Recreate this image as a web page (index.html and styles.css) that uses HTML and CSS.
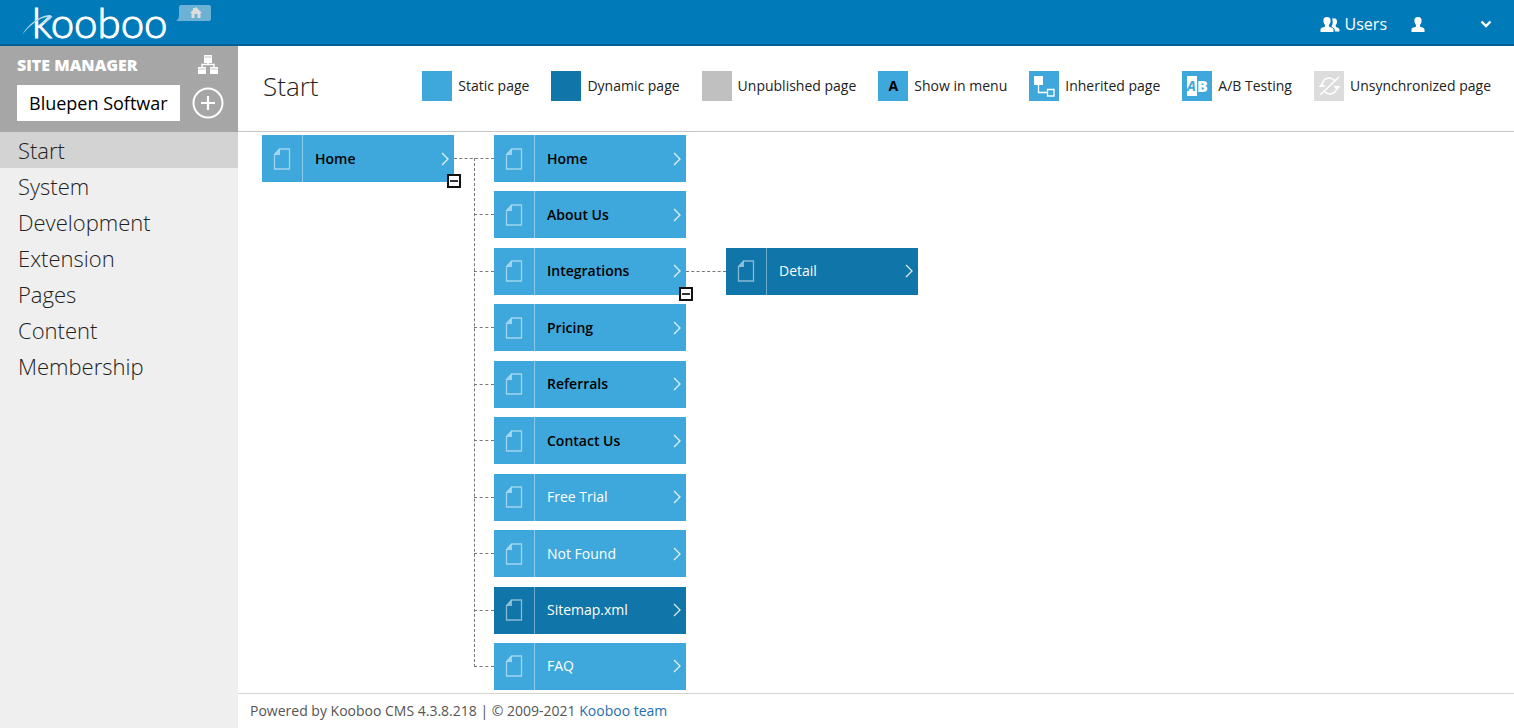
FILE: index.html
```html
<!DOCTYPE html>
<html lang="en">

<head>
    <meta charset="UTF-8">
    <meta name="viewport" content="width=device-width, initial-scale=1.0">
    <title>Start - Kooboo CMS</title>
    <link rel="stylesheet" href="styles.css">
</head>

<body>

    <!-- icons used more than once -->
    <svg class="sprite" aria-hidden="true">
        <symbol id="icon-page" viewBox="0 0 18 22">
            <path d="M6.5 1H16.5V21H1.5V6.5Z" fill="none" stroke="currentColor" stroke-width="1.3" />
            <path d="M7 1V7H1.5Z" fill="currentColor" />
        </symbol>
        <symbol id="icon-arrow" viewBox="0 0 8 14">
            <path d="M1 1L7 7L1 13" fill="none" stroke="currentColor" stroke-width="1.3" />
        </symbol>
        <symbol id="icon-user" viewBox="0 0 14 15">
            <path d="M7 0C9.6 0 10.8 1.600 10.600 4C10.400 6 9.700 7.200 9 8V9.500C9.600 10.300 13.500 10.300 13.500 12.500V15H.5V12.500C.5 10.300 4.400 10.300 5 9.500V8C4.300 7.200 3.600 6 3.400 4C3.200 1.600 4.400 0 7 0Z" fill="currentColor" />
        </symbol>
    </svg>

    <header class="navbar">
        <div class="brand">
            <svg class="swoosh" viewBox="0 0 32 22" aria-hidden="true">
                <path d="M0 21C6 11 16 2 27 1C33 1 29 7 15 12C24 7 28 3 25 3C17 4 8 11 0 21Z" fill="#b5dcf0" />
            </svg>
            <a class="logo" href="#">kooboo</a>
            <a class="home-tab" href="#" aria-label="Home">
                <svg viewBox="0 0 36 17" width="36" height="17">
                    <path d="M5 0H33Q35 0 35 2V14Q35 16 33 16H0Q3 14 3 10V2Q3 0 5 0Z" fill="#6cb2d4" />
                    <path d="M20 2L26 8H24.500V13H21.500V9H18.500V13H15.500V8H14L17 5V3H18.500V3.500Z" fill="#dcdcdc" />
                </svg>
            </a>
        </div>
        <nav class="user-nav">
            <a class="users" href="#">
                <svg width="20" height="15" viewBox="0 0 20 15" aria-hidden="true">
                    <use href="#icon-user" x="0" y="0" width="14" height="15" />
                    <path d="M12 1.800C15 .3 17.300 2 17 5C16.900 6.500 16.300 7.500 15.700 8.200V9.500C16.300 10.500 19.500 10.600 19.500 13V14.500H15C15 11.500 13.500 10.800 11.500 9.500C12.800 7.500 13.200 4 12 1.800Z" fill="#fff" />
                </svg>
                Users
            </a>
            <a class="profile" href="#" aria-label="Profile">
                <svg width="14" height="15"><use href="#icon-user" /></svg>
            </a>
            <button class="more" type="button" aria-label="More">
                <svg width="12" height="8" viewBox="0 0 12 8"><path d="M1.500 1.500L6 6L10.500 1.500" fill="none" stroke="#fff" stroke-width="2.400" /></svg>
            </button>
        </nav>
    </header>

    <div class="page">
        <aside class="sidebar">
            <div class="site-manager">
                <div class="row">
                    <label for="site">SITE MANAGER</label>
                    <a class="tool" href="#" aria-label="Site map">
                        <svg width="20" height="20" viewBox="0 0 20 20">
                            <path d="M6 0H14V8H6ZM0 12H8V19H0ZM12 12H20V19H12Z" fill="#fff" />
                            <path d="M10 8V10M4 12V9.500H16V12" fill="none" stroke="#fff" stroke-width="1.400" />
                            <path d="M6.500 2H13.500M.5 14H7.500M12.500 14H19.500" stroke="#c4c4c4" stroke-width="1" />
                        </svg>
                    </a>
                </div>
                <div class="row">
                    <input class="site-name" id="site" type="text" value="Bluepen Softwar">
                    <button class="tool" type="button" aria-label="Add site">
                        <svg width="32" height="32" viewBox="0 0 32 32">
                            <circle cx="16" cy="16" r="14.500" fill="none" stroke="#fff" stroke-width="2" />
                            <path d="M16 9V23M9 16H23" stroke="#fff" stroke-width="2.200" />
                        </svg>
                    </button>
                </div>
            </div>
            <nav class="menu">
                <a class="active" href="#">Start</a>
                <a href="#">System</a>
                <a href="#">Development</a>
                <a href="#">Extension</a>
                <a href="#">Pages</a>
                <a href="#">Content</a>
                <a href="#">Membership</a>
            </nav>
        </aside>

        <main class="main">
            <div class="title-bar">
                <h1>Start</h1>
                <ul class="legend">
                    <li><span class="swatch"></span>Static page</li>
                    <li><span class="swatch dynamic"></span>Dynamic page</li>
                    <li><span class="swatch unpublished"></span>Unpublished page</li>
                    <li><span class="swatch">A</span>Show in menu</li>
                    <li>
                        <span class="swatch">
                            <svg width="30" height="30" viewBox="0 0 30 30" aria-hidden="true">
                                <path d="M5 5H14V14H5Z" fill="#fff" />
                                <path d="M9.500 14V21.500H18M18.500 18.500H25V25H18.500Z" fill="none" stroke="#fff" stroke-width="1.300" />
                            </svg>
                        </span>Inherited page
                    </li>
                    <li>
                        <span class="swatch ab">
                            <span class="ab-a">A</span><span class="ab-b">B</span>
                        </span>A/B Testing
                    </li>
                    <li>
                        <span class="swatch unsync">
                            <svg width="30" height="30" viewBox="0 0 30 30" aria-hidden="true">
                                <path d="M8 15C8 7 16 5 20.500 9.500M23 15C23 23 15 25 10.500 20.500M6 24L25 6" fill="none" stroke="#fff" stroke-width="1.500" />
                                <path d="M4.500 16L8 12L11.500 16ZM19.500 15H26.500L23 19Z" fill="#fff" />
                            </svg>
                        </span>Unsynchronized page
                    </li>
                </ul>
            </div>

            <div class="tree">
                <div class="branch">
                    <div class="node in-menu">
                        <span class="node-icon"><svg width="18" height="22"><use href="#icon-page" /></svg></span>
                        <a href="#">Home</a>
                        <svg class="arrow" width="8" height="14"><use href="#icon-arrow" /></svg>
                        <button class="toggle" type="button" aria-label="Collapse"></button>
                    </div>
                    <ul class="children">
                        <li class="branch">
                            <div class="node in-menu">
                                <span class="node-icon"><svg width="18" height="22"><use href="#icon-page" /></svg></span>
                                <a href="#">Home</a>
                                <svg class="arrow" width="8" height="14"><use href="#icon-arrow" /></svg>
                            </div>
                        </li>
                        <li class="branch">
                            <div class="node in-menu">
                                <span class="node-icon"><svg width="18" height="22"><use href="#icon-page" /></svg></span>
                                <a href="#">About Us</a>
                                <svg class="arrow" width="8" height="14"><use href="#icon-arrow" /></svg>
                            </div>
                        </li>
                        <li class="branch">
                            <div class="node in-menu">
                                <span class="node-icon"><svg width="18" height="22"><use href="#icon-page" /></svg></span>
                                <a href="#">Integrations</a>
                                <svg class="arrow" width="8" height="14"><use href="#icon-arrow" /></svg>
                                <button class="toggle" type="button" aria-label="Collapse"></button>
                            </div>
                            <ul class="children single">
                                <li class="branch">
                                    <div class="node dynamic">
                                        <span class="node-icon"><svg width="18" height="22"><use href="#icon-page" /></svg></span>
                                        <a href="#">Detail</a>
                                        <svg class="arrow" width="8" height="14"><use href="#icon-arrow" /></svg>
                                    </div>
                                </li>
                            </ul>
                        </li>
                        <li class="branch">
                            <div class="node in-menu">
                                <span class="node-icon"><svg width="18" height="22"><use href="#icon-page" /></svg></span>
                                <a href="#">Pricing</a>
                                <svg class="arrow" width="8" height="14"><use href="#icon-arrow" /></svg>
                            </div>
                        </li>
                        <li class="branch">
                            <div class="node in-menu">
                                <span class="node-icon"><svg width="18" height="22"><use href="#icon-page" /></svg></span>
                                <a href="#">Referrals</a>
                                <svg class="arrow" width="8" height="14"><use href="#icon-arrow" /></svg>
                            </div>
                        </li>
                        <li class="branch">
                            <div class="node in-menu">
                                <span class="node-icon"><svg width="18" height="22"><use href="#icon-page" /></svg></span>
                                <a href="#">Contact Us</a>
                                <svg class="arrow" width="8" height="14"><use href="#icon-arrow" /></svg>
                            </div>
                        </li>
                        <li class="branch">
                            <div class="node">
                                <span class="node-icon"><svg width="18" height="22"><use href="#icon-page" /></svg></span>
                                <a href="#">Free Trial</a>
                                <svg class="arrow" width="8" height="14"><use href="#icon-arrow" /></svg>
                            </div>
                        </li>
                        <li class="branch">
                            <div class="node">
                                <span class="node-icon"><svg width="18" height="22"><use href="#icon-page" /></svg></span>
                                <a href="#">Not Found</a>
                                <svg class="arrow" width="8" height="14"><use href="#icon-arrow" /></svg>
                            </div>
                        </li>
                        <li class="branch">
                            <div class="node dynamic">
                                <span class="node-icon"><svg width="18" height="22"><use href="#icon-page" /></svg></span>
                                <a href="#">Sitemap.xml</a>
                                <svg class="arrow" width="8" height="14"><use href="#icon-arrow" /></svg>
                            </div>
                        </li>
                        <li class="branch">
                            <div class="node">
                                <span class="node-icon"><svg width="18" height="22"><use href="#icon-page" /></svg></span>
                                <a href="#">FAQ</a>
                                <svg class="arrow" width="8" height="14"><use href="#icon-arrow" /></svg>
                            </div>
                        </li>
                    </ul>
                </div>
            </div>

            <footer class="footer">
                Powered by Kooboo CMS 4.3.8.218 | © 2009-2021 <a href="#">Kooboo team</a>
            </footer>
        </main>
    </div>

</body>

</html>
```

FILE: styles.css
```css
* {
    margin: 0;
    padding: 0;
    box-sizing: border-box;
}

body {
    font-family: "Segoe UI", "Open Sans", sans-serif;
    font-size: 14px;
    line-height: 20px;
    color: #222;
    background-color: #fff;
    min-height: 100vh;
    display: flex;
    flex-direction: column;
}

a {
    color: inherit;
    text-decoration: none;
}

ul {
    list-style: none;
}

button {
    border: none;
    background: none;
    cursor: pointer;
}

svg {
    display: block;
}

.sprite {
    position: absolute;
    width: 0;
    height: 0;
}

/* Top bar */
.navbar {
    display: flex;
    justify-content: space-between;
    align-items: center;
    height: 46px;
    padding: 0 22px;
    color: #fff;
    background-color: #007ab8;
    border-bottom: 2px solid #005f94;
}

.brand {
    display: flex;
    position: relative;
    padding-left: 10px;
}

.logo {
    font-family: Lato, sans-serif;
    font-weight: 300;
    font-size: 42px;
    line-height: 44px;
    -webkit-text-stroke: 1px #fff;
}

.swoosh {
    position: absolute;
    left: 0;
    top: 14px;
    width: 32px;
    height: 22px;
}

.home-tab {
    padding-top: 5px;
    margin-left: 8px;
}

.user-nav {
    display: flex;
    align-items: center;
    font-size: 16px;
    padding-top: 4px;
}

.users {
    display: flex;
    align-items: center;
    gap: 5px;
}

.profile {
    margin-left: 24px;
}

.more {
    margin-left: 55px;
}

.page {
    flex: 1;
    display: flex;
}

/* Sidebar */
.sidebar {
    flex: none;
    width: 238px;
    background-color: #efefef;
}

.site-manager {
    display: flex;
    flex-direction: column;
    gap: 9px;
    height: 86px;
    padding: 8px 14px 0 17px;
    background-color: #a6a6a6;
}

.row {
    display: flex;
    justify-content: space-between;
    align-items: center;
}

.row label {
    font-size: 16px;
    line-height: 22px;
    font-weight: 800;
    color: #fff;
}

.tool {
    display: flex;
    justify-content: center;
    width: 32px;
}

.site-name {
    width: 163px;
    height: 36px;
    padding: 0 12px;
    border: none;
    background-color: #fff;
    font-family: inherit;
    font-size: 18px;
    color: #000;
}

.menu a {
    display: block;
    padding-left: 18px;
    font-size: 22px;
    line-height: 36px;
    font-weight: 300;
}

.menu .active {
    background-color: #d3d3d3;
}

/* Title and legend */
.main {
    flex: 1;
    display: flex;
    flex-direction: column;
}

.title-bar {
    display: flex;
    justify-content: space-between;
    align-items: center;
    height: 86px;
    padding: 0 23px 6px 25px;
    border-bottom: 1px solid #c6c6c6;
}

h1 {
    font-size: 26px;
    line-height: 36px;
    font-weight: 300;
}

.legend {
    display: flex;
    gap: 22px;
}

.legend li {
    display: flex;
    align-items: center;
    gap: 6px;
    white-space: nowrap;
}

.swatch {
    display: flex;
    justify-content: center;
    align-items: center;
    width: 30px;
    height: 30px;
    background-color: #3ea8dc;
    color: #000;
    font-weight: 700;
}

.swatch.dynamic {
    background-color: #1075a9;
}

.swatch.unpublished {
    background-color: #c0c0c0;
}

.swatch.unsync {
    background-color: #dcdcdc;
}

.ab-a {
    width: 10px;
    background-color: #fff;
    color: #3ea8dc;
    font-style: italic;
}

.ab-b {
    color: #fff;
    font-size: 16px;
    font-weight: 800;
}

/* Page tree */
.tree {
    flex: 1;
    display: flex;
    padding: 3px 24px;
}

.branch {
    display: flex;
    position: relative;
}

.node {
    flex: none;
    display: flex;
    align-items: center;
    position: relative;
    width: 192px;
    height: 47px;
    padding-right: 5px;
    color: #fff;
    background-color: #3ea8dc;
}

.node.dynamic {
    background-color: #1075a9;
}

.node.in-menu a {
    color: #000;
    font-weight: 600;
}

.node a {
    flex: 1;
    padding-left: 12px;
}

.node-icon {
    display: flex;
    justify-content: center;
    align-items: center;
    width: 41px;
    height: 100%;
    color: rgba(255, 255, 255, 0.5);
    border-right: 1px solid rgba(255, 255, 255, 0.4);
}

.arrow {
    opacity: 0.85;
}

.toggle {
    position: absolute;
    right: -7px;
    bottom: -6px;
    z-index: 1;
    width: 14px;
    height: 14px;
    border: 2px solid #111;
    background: linear-gradient(#333, #333) center / 8px 2px no-repeat #fff;
}

.children {
    display: flex;
    flex-direction: column;
    justify-content: space-between;
    position: relative;
    padding-left: 40px;
}

/* trunk joining the first child to the last */
.children::before {
    content: "";
    position: absolute;
    left: 20px;
    top: 23px;
    bottom: 23px;
    border-left: 1px dashed #777;
}

.children > .branch::before {
    content: "";
    position: absolute;
    left: -20px;
    top: 23px;
    width: 20px;
    border-top: 1px dashed #777;
}

.children > .branch:first-child::before {
    left: -40px;
    width: 40px;
}

.children.single::before {
    display: none;
}

.footer {
    height: 35px;
    padding: 7px 12px;
    border-top: 1px solid #d4d4d4;
    color: #555;
}

.footer a {
    color: #1f6fad;
}
```
